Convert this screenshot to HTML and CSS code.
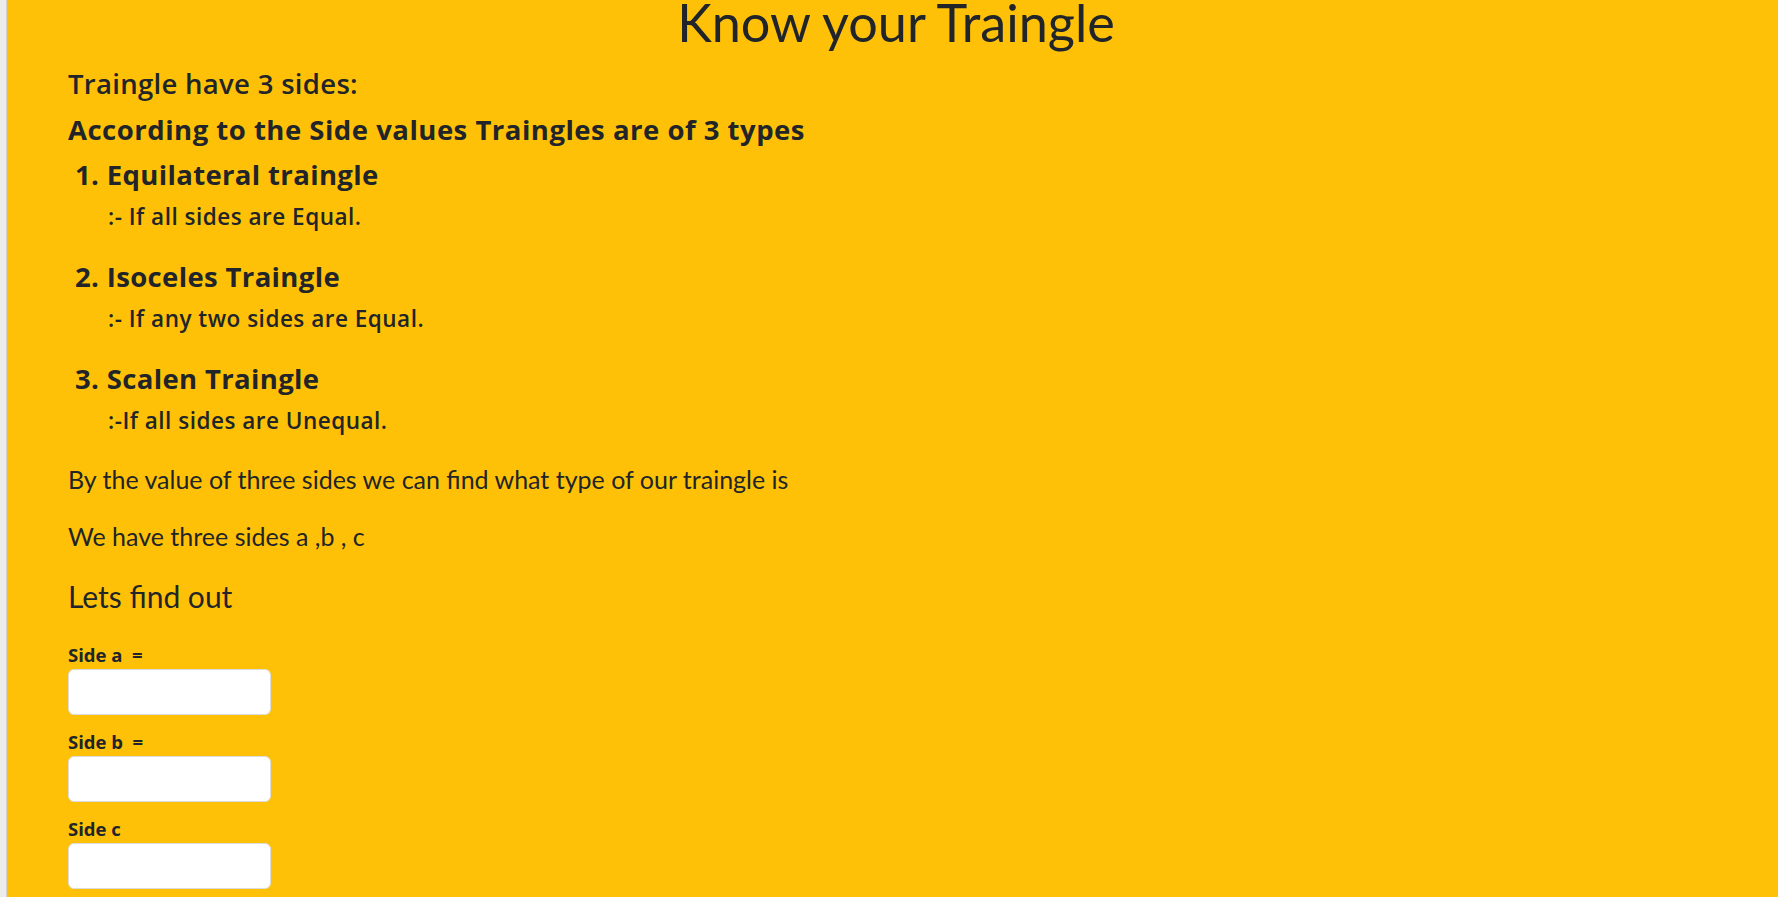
FILE: index.html
```html
<!DOCTYPE html>
<html lang="en">
<head>
<meta charset="utf-8">
<title>Know your Traingle</title>
<link rel="stylesheet" href="styles.css">
</head>
<body>
<div class="page">
  <div class="edge"></div>
  <main class="content">
    <h1 class="title">Know your Traingle</h1>
    <h4 class="intro">Traingle have 3 sides:</h4>
    <h4 class="subhead">According to the Side values Traingles are of 3 types</h4>
    <ol class="types">
      <li class="type">
        <h4 class="type-name">1. Equilateral traingle</h4>
        <p class="type-desc">:- If all sides are Equal.</p>
      </li>
      <li class="type">
        <h4 class="type-name">2. Isoceles Traingle</h4>
        <p class="type-desc">:- If any two sides are Equal.</p>
      </li>
      <li class="type">
        <h4 class="type-name">3. Scalen Traingle</h4>
        <p class="type-desc">:-If all sides are Unequal.</p>
      </li>
    </ol>
    <p class="text">By the value of three sides we can find what type of our traingle is</p>
    <p class="text">We have three sides a ,b , c</p>
    <p class="lead">Lets find out</p>
    <form class="sides">
      <div class="field">
        <label class="field-label" for="a">Side a &nbsp;=</label>
        <input class="field-input" id="a" type="text">
      </div>
      <div class="field">
        <label class="field-label" for="b">Side b &nbsp;=</label>
        <input class="field-input" id="b" type="text">
      </div>
      <div class="field">
        <label class="field-label" for="c">Side c</label>
        <input class="field-input" id="c" type="text">
      </div>
    </form>
  </main>
</div>
</body>
</html>
```
FILE: styles.css
```css
html, body {
  margin: 0;
  padding: 0;
  height: 100%;
  overflow: hidden;
}

body {
  background: #ffc107;
  color: #212529;
  font-family: Lato, "Open Sans", sans-serif;
}

.page {
  display: flex;
  min-height: 897px;
}

.edge {
  width: 6px;
  flex: none;
  background: #ececec;
  border-right: 1px solid #d2d2d2;
}

.content {
  flex: 1;
  background: #ffc107;
  padding: 0 54px 0 61px;
}

.title {
  margin: 0 0 23px;
  font-family: Lato, sans-serif;
  font-weight: 400;
  font-size: 52.2px;
  line-height: 44px;
  text-align: center;
}

.intro {
  margin: 0 0 13px;
  font-family: "Open Sans", sans-serif;
  font-weight: 600;
  font-size: 27.5px;
  letter-spacing: 0.3px;
  line-height: 33px;
}

.subhead,
.type-name {
  margin: 0;
  font-family: "Open Sans", sans-serif;
  font-weight: 700;
  font-size: 27.5px;
  letter-spacing: 0.35px;
  line-height: 33px;
}

.subhead {
  margin-bottom: 12px;
  letter-spacing: 0.5px;
}

.types {
  list-style: none;
  margin: 0;
  padding: 0;
}

.type {
  margin-bottom: 30px;
}

.type-name {
  padding-left: 7px;
  margin-bottom: 12px;
}

.type-desc {
  margin: 0;
  padding-left: 40px;
  font-family: "Open Sans", sans-serif;
  font-weight: 600;
  font-size: 22.5px;
  letter-spacing: 0.5px;
  line-height: 27px;
}

.text {
  margin: 0 0 27px;
  font-size: 25px;
  line-height: 30px;
}

.lead {
  margin: 0 0 30px;
  font-size: 30px;
  font-weight: 400;
  line-height: 36px;
}

.sides {
  display: flex;
  flex-direction: column;
  gap: 16px;
}

.field {
  display: flex;
  flex-direction: column;
  align-items: flex-start;
  gap: 3px;
}

.field-label {
  font-family: "Open Sans", sans-serif;
  font-weight: 700;
  font-size: 18.5px;
  line-height: 22px;
}

.field-input {
  box-sizing: border-box;
  width: 203px;
  height: 46px;
  margin: 0;
  padding: 6px 12px;
  background: #fff;
  border: 1px solid #dcdcdc;
  border-radius: 6px;
  font-size: 18px;
}
```
